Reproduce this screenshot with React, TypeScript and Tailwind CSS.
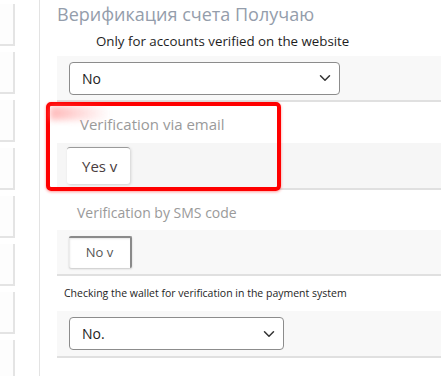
import { ChevronDown } from 'lucide-react'

const railBoxes = [4, 52, 100, 148, 196, 244, 292, 340]

function Select({ value, width }: { value: string; width: string }) {
  return (
    <div className={`flex h-[33px] ${width} items-center justify-between rounded-[4px] border border-[#8c8c8c] bg-white pl-[12px] pr-[5px] text-[14px] text-[#222]`}>
      <span>{value}</span>
      <ChevronDown size={18} strokeWidth={2} className="text-[#333]" />
    </div>
  )
}

export default function App() {
  return (
    <div className="relative flex h-[376px] w-[441px] overflow-hidden bg-white" style={{ fontFamily: '"Open Sans", "Noto Sans", sans-serif' }}>
      {/* left rail */}
      <div className="relative w-[40px] shrink-0 border-r border-[#e3e3e3]">
        {railBoxes.map((top) => (
          <div
            key={top}
            className="absolute left-0 h-[42px] w-[15px] border-r-2 border-b-2 border-[#e4e4e4] bg-[#fdfdfd]"
            style={{ top }}
          />
        ))}
      </div>

      <div className="flex flex-1 flex-col pl-[17px]">
        <div className="flex h-[28px] items-center text-[18px] text-[#949dab]">Верификация счета Получаю</div>

        <div className="flex h-[28px] items-center pl-[39px] text-[13.3px] text-[#1e1e1e]">Only for accounts verified on the website</div>
        <div className="flex h-[46px] items-center border-b-2 border-[#e0e0e0] bg-[#f8f8f8] pl-[12px]">
          <Select value="No" width="w-[271px]" />
        </div>

        <div className="flex h-[41px] items-center pl-[23px] pt-[4px] text-[15px] text-[#9a9a9a]">Verification via email</div>
        <div className="flex h-[47px] items-center border-b-2 border-[#e0e0e0] bg-[#f6f6f6] pl-[10px]">
          <div className="flex h-[37px] w-[63px] items-center rounded-[3px] border-t border-[#9a9a9a] bg-white pl-[15px] text-[15px] text-[#4a3d40] shadow-[1px_1px_3px_rgba(0,0,0,0.15)]">
            Yes v
          </div>
        </div>

        <div className="flex h-[40px] items-center pl-[20px] pt-[4px] text-[14px] text-[#9a9a9a]">Verification by SMS code</div>
        <div className="flex h-[46px] items-center border-b-2 border-[#e0e0e0] bg-[#f8f8f8] pl-[12px]">
          <div className="flex h-[32px] w-[63px] items-center justify-center rounded-[2px] border-t-2 border-r-2 border-[#8a8a8a] bg-white text-[13px] text-[#555] shadow-[inset_1px_1px_2px_rgba(0,0,0,0.1),0_1px_2px_rgba(0,0,0,0.2)]">
            No v
          </div>
        </div>

        <div className="flex h-[35px] items-center pl-[7px] text-[10.5px] text-[#1e1e1e]">Checking the wallet for verification in the payment system</div>
        <div className="flex h-[47px] items-center border-b-2 border-[#e0e0e0] bg-[#f8f8f8] pl-[12px]">
          <Select value="No." width="w-[215px]" />
        </div>
      </div>

      {/* red annotation box */}
      <div className="pointer-events-none absolute left-[46px] top-[102px] h-[89px] w-[235px] rounded-[5px] border-4 border-[#ff0000] shadow-[0_1px_3px_rgba(255,0,0,0.4)]">
        <div className="absolute left-0 top-0 h-[14px] w-[60px] rounded-tl-[3px] bg-gradient-to-r from-[#f88] to-transparent opacity-60 blur-[3px]" />
      </div>
    </div>
  )
}
